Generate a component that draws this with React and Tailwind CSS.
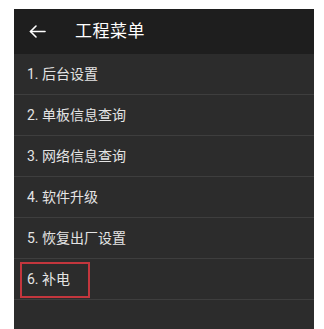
const items = [
  '1. 后台设置',
  '2. 单板信息查询',
  '3. 网络信息查询',
  '4. 软件升级',
  '5. 恢复出厂设置',
  '6. 补电',
];

const BackArrow = () => (
  <svg width="17" height="13" viewBox="0 0 17 13" fill="none" stroke="white" strokeWidth="1.6" strokeLinecap="round" strokeLinejoin="round">
    <path d="M16 6.5H1.5" />
    <path d="M7 1L1.5 6.5L7 12" />
  </svg>
);

export default function App() {
  return (
    <div
      className="w-[324px] h-[329px] bg-white pl-[14px] pr-[10px] pt-[9px] flex flex-col overflow-hidden"
      style={{ fontFamily: 'Roboto, "Noto Sans CJK SC", sans-serif' }}
    >
      <div className="flex-1 flex flex-col bg-[#2c2c2c]">
        {/* Header */}
        <div className="h-[45px] bg-[#1e1e1e] flex items-center pl-[15px]">
          <BackArrow />
          <span className="ml-[29px] text-[17px] text-white tracking-[0.5px]">工程菜单</span>
        </div>

        {/* Menu items */}
        {items.map((item, i) => (
          <div
            key={item}
            className="relative h-[41px] border-b border-[#3e3e3e] flex items-center pl-[13px] text-[14px] text-[#e4e4e4]"
          >
            {item}
            {i === items.length - 1 && (
              <div className="absolute left-[6px] top-[3px] w-[70px] h-[36px] border-2 border-[#c3363d]" />
            )}
          </div>
        ))}
      </div>
    </div>
  );
}
